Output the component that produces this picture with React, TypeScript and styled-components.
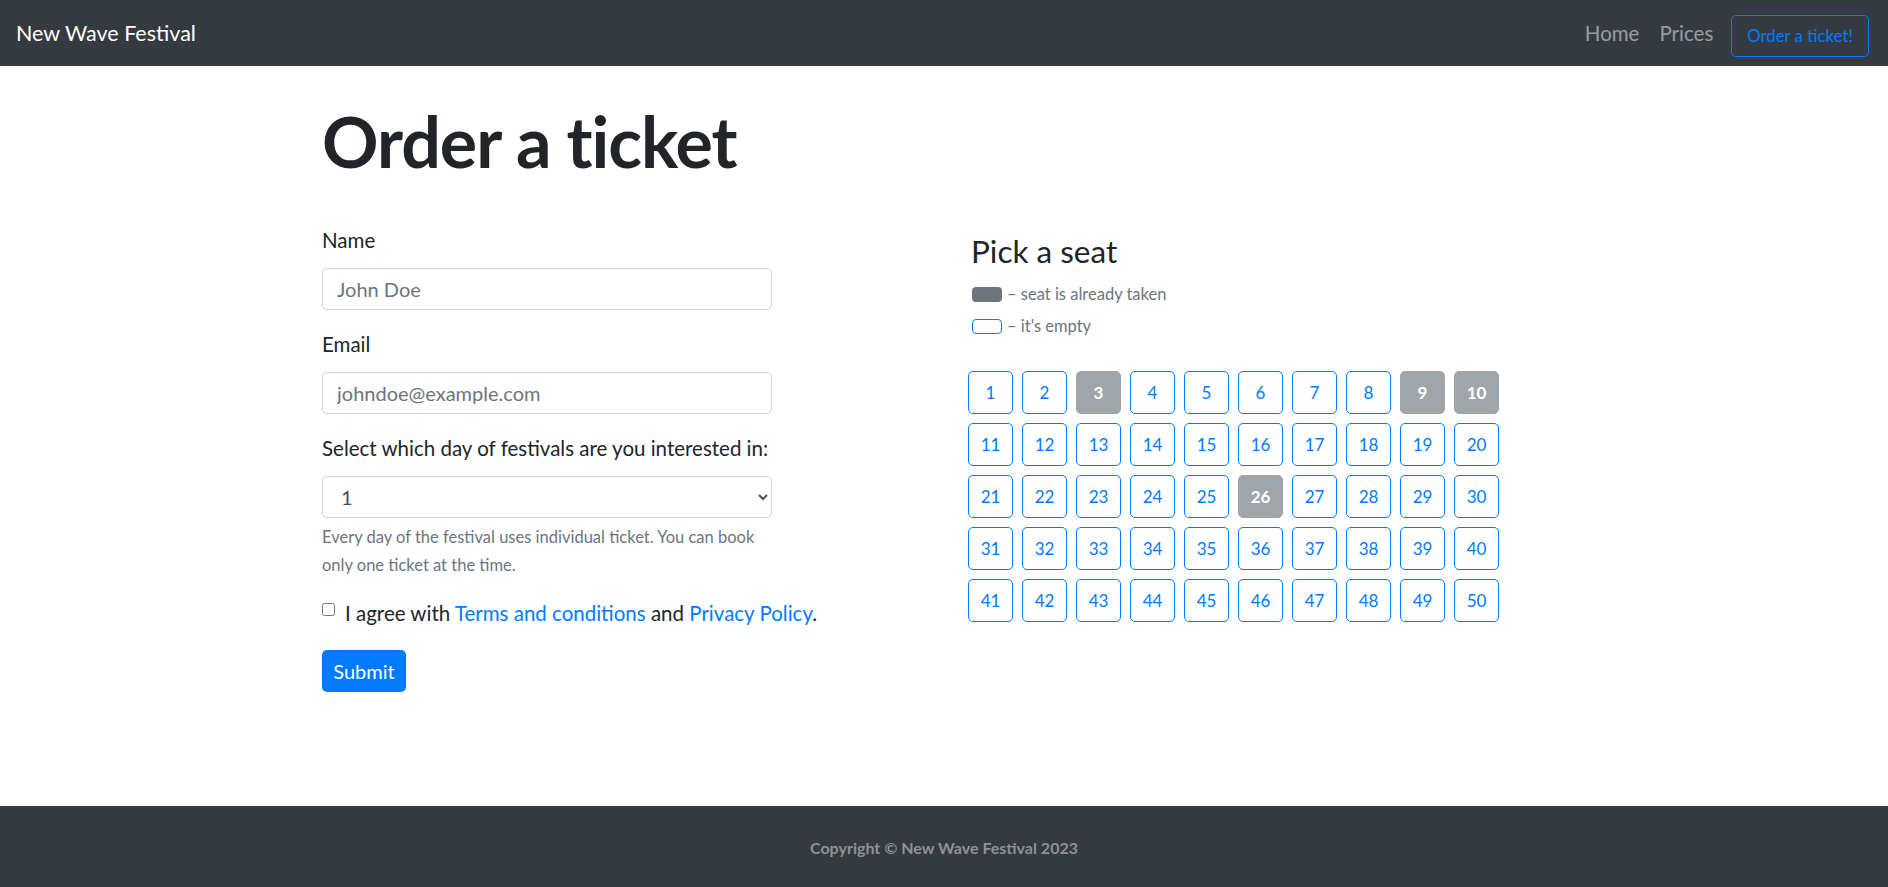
import React from "react";
import styled, { createGlobalStyle } from "styled-components";

const GlobalStyle = createGlobalStyle`
  html, body { margin: 0; padding: 0; }
  body {
    font-family: Lato, "Noto Sans", "Liberation Sans", sans-serif;
    color: #212529;
    background: #fff;
  }
  * { box-sizing: border-box; }
`;

const Page = styled.div`
  min-height: 100vh;
  display: flex;
  flex-direction: column;
`;

const NavBar = styled.nav`
  height: 66px;
  background: #343a40;
  display: flex;
  align-items: center;
  padding: 0 19px 0 16px;
`;

const Brand = styled.a`
  font-size: 21.5px;
  color: #fff;
  text-decoration: none;
  margin-top: -1px;
`;

const NavList = styled.div`
  margin-left: auto;
  display: flex;
  align-items: center;
  gap: 20px;
`;

const NavLink = styled.a`
  font-size: 20.5px;
  color: rgba(255, 255, 255, 0.5);
  text-decoration: none;
`;

const OrderButton = styled.a`
  align-self: flex-start;
  margin-top: 5px;
  margin-left: -2px;
  height: 42px;
  display: flex;
  align-items: center;
  padding: 0 15px;
  border: 1px solid #007bff;
  border-radius: 5px;
  color: #007bff;
  font-size: 16.8px;
  text-decoration: none;
`;

const Main = styled.main`
  flex: 1;
`;

const Container = styled.div`
  width: 1244px;
  margin: 0 auto;
`;

const Title = styled.h1`
  margin: 0;
  padding-top: 31px;
  font-size: 70px;
  line-height: 88px;
  font-weight: 700;
  letter-spacing: -1px;
  color: #212529;
`;

const Row = styled.div`
  display: grid;
  grid-template-columns: 646px 1fr;
  margin-top: 41px;
`;

const Form = styled.form`
  width: 520px;
  display: flex;
  flex-direction: column;
`;

const Group = styled.div`
  display: flex;
  flex-direction: column;
  margin-bottom: 20px;
`;

const Label = styled.label`
  font-size: 20.5px;
  line-height: 29px;
  margin-bottom: 13px;
`;

const Input = styled.input`
  width: 450px;
  height: 42px;
  border: 1px solid #ced4da;
  border-radius: 5px;
  padding: 0 14px;
  font-family: inherit;
  font-size: 20px;
  color: #495057;
  &::placeholder { color: #6c757d; }
`;

const Select = styled.select`
  width: 450px;
  height: 42px;
  border: 1px solid #ced4da;
  border-radius: 5px;
  padding: 0 14px;
  font-family: inherit;
  font-size: 20px;
  color: #495057;
  background: #fff;
`;

const Help = styled.small`
  display: block;
  width: 450px;
  margin-top: 5px;
  font-size: 16.5px;
  line-height: 28px;
  color: #6c757d;
`;

const CheckRow = styled.div`
  display: flex;
  align-items: flex-start;
  gap: 10px;
  font-size: 20.5px;
  line-height: 29px;
`;

const Checkbox = styled.input`
  margin: 4px 0 0;
  width: 13px;
  height: 13px;
`;

const Link = styled.a`
  color: #007bff;
  text-decoration: none;
`;

const Submit = styled.button`
  margin-top: 22px;
  align-self: flex-start;
  width: 84px;
  height: 42px;
  border: none;
  border-radius: 5px;
  background: #007bff;
  color: #fff;
  font-family: inherit;
  font-size: 20px;
`;

const SeatPanel = styled.section`
  padding-top: 5px;
`;

const SeatTitle = styled.h3`
  margin: 0 0 0 3px;
  font-size: 31.5px;
  line-height: 40px;
  font-weight: 400;
`;

const Legend = styled.div`
  display: flex;
  flex-direction: column;
  margin: 7px 0 0 4px;
`;

const LegendItem = styled.div`
  display: flex;
  align-items: center;
  gap: 5px;
  height: 32px;
  font-size: 16.5px;
  color: #6c757d;
`;

const Swatch = styled.span<{ $taken?: boolean }>`
  width: 30px;
  height: 15px;
  border-radius: 4px;
  background: ${(p) => (p.$taken ? "#6c757d" : "#fff")};
  border: ${(p) => (p.$taken ? "none" : "1px solid #007bff")};
`;

const SeatGrid = styled.div`
  display: grid;
  grid-template-columns: repeat(10, 45px);
  column-gap: 9px;
  row-gap: 9px;
  margin-top: 29px;
`;

const Seat = styled.button<{ $taken?: boolean }>`
  width: 45px;
  height: 43px;
  border-radius: 5px;
  font-family: inherit;
  font-size: 17px;
  padding: 0;
  border: 1px solid ${(p) => (p.$taken ? "#a0a5a9" : "#007bff")};
  background: ${(p) => (p.$taken ? "#a0a5a9" : "#fff")};
  color: ${(p) => (p.$taken ? "#fff" : "#007bff")};
  font-weight: ${(p) => (p.$taken ? 700 : 400)};
`;

const Footer = styled.footer`
  height: 81px;
  background: #343a40;
  display: flex;
  align-items: center;
  justify-content: center;
  font-size: 16px;
  font-weight: 700;
  color: #8e9296;
  padding-top: 2px;
`;

const taken = new Set([3, 9, 10, 26]);

export default function App() {
  return (
    <Page>
      <GlobalStyle />
      <NavBar>
        <Brand href="#">New Wave Festival</Brand>
        <NavList>
          <NavLink href="#">Home</NavLink>
          <NavLink href="#">Prices</NavLink>
          <OrderButton href="#">Order a ticket!</OrderButton>
        </NavList>
      </NavBar>
      <Main>
        <Container>
          <Title>Order a ticket</Title>
          <Row>
            <Form onSubmit={(e) => e.preventDefault()}>
              <Group>
                <Label htmlFor="name">Name</Label>
                <Input id="name" type="text" placeholder="John Doe" />
              </Group>
              <Group>
                <Label htmlFor="email">Email</Label>
                <Input id="email" type="email" placeholder="johndoe@example.com" />
              </Group>
              <Group>
                <Label htmlFor="day">Select which day of festivals are you interested in:</Label>
                <Select id="day" defaultValue="1">
                  <option value="1">1</option>
                  <option value="2">2</option>
                  <option value="3">3</option>
                </Select>
                <Help>
                  Every day of the festival uses individual ticket. You can book only one ticket at the time.
                </Help>
              </Group>
              <CheckRow>
                <Checkbox type="checkbox" id="agree" />
                <label htmlFor="agree">
                  I agree with <Link href="#">Terms and conditions</Link> and <Link href="#">Privacy Policy</Link>.
                </label>
              </CheckRow>
              <Submit type="submit">Submit</Submit>
            </Form>
            <SeatPanel>
              <SeatTitle>Pick a seat</SeatTitle>
              <Legend>
                <LegendItem>
                  <Swatch $taken /> – seat is already taken
                </LegendItem>
                <LegendItem>
                  <Swatch /> – it's empty
                </LegendItem>
              </Legend>
              <SeatGrid>
                {Array.from({ length: 50 }, (_, i) => i + 1).map((n) => (
                  <Seat key={n} type="button" $taken={taken.has(n)} disabled={taken.has(n)}>
                    {n}
                  </Seat>
                ))}
              </SeatGrid>
            </SeatPanel>
          </Row>
        </Container>
      </Main>
      <Footer>Copyright © New Wave Festival 2023</Footer>
    </Page>
  );
}
